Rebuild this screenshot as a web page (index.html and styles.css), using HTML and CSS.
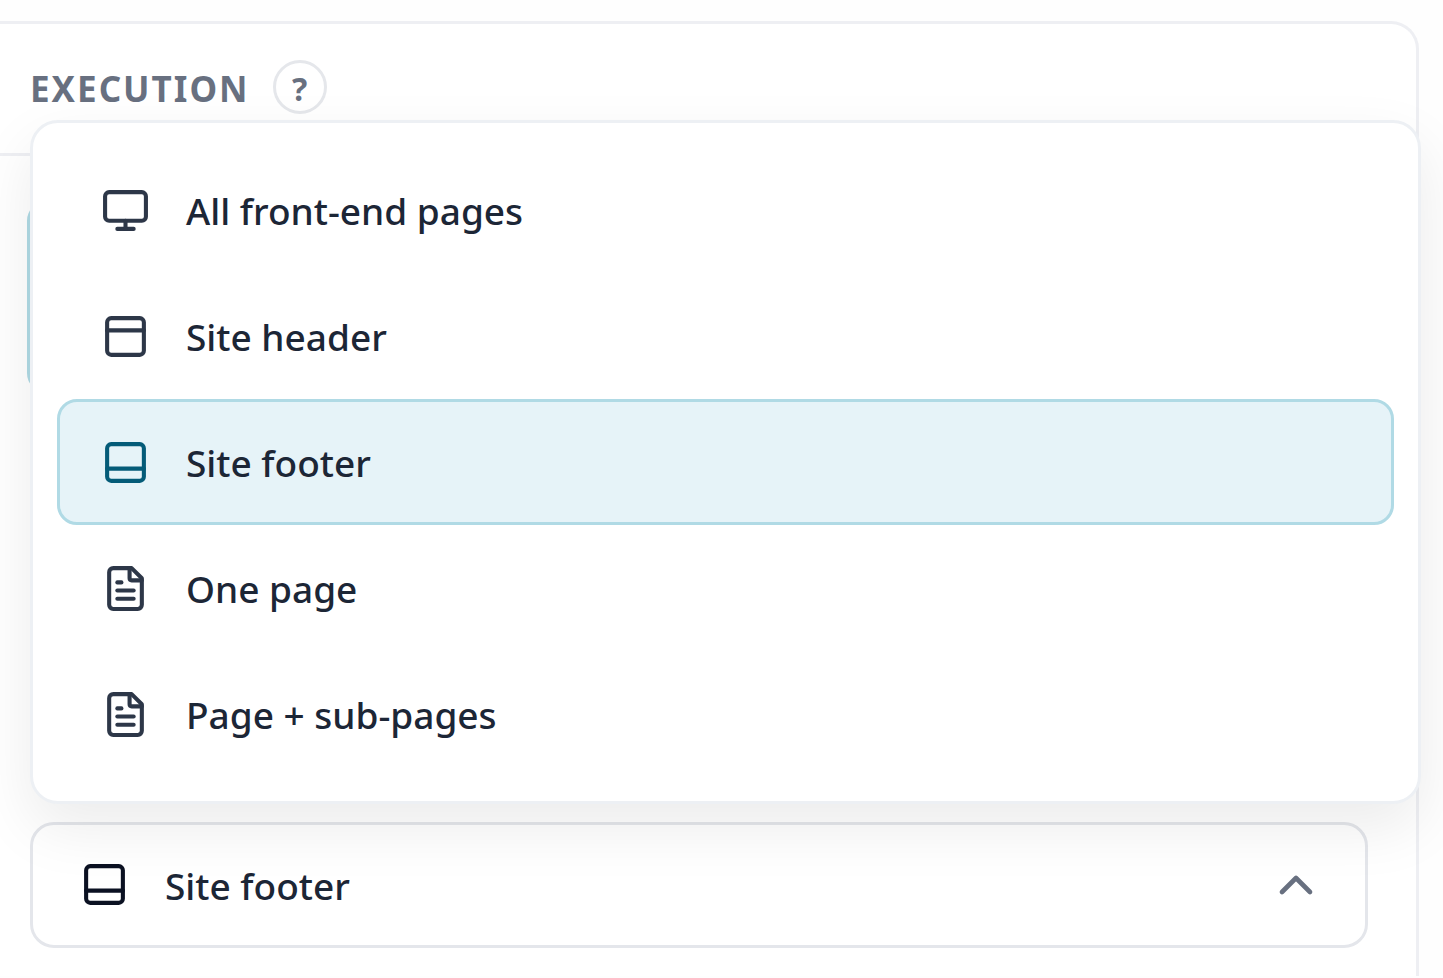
FILE: index.html
```html
<!DOCTYPE html>
<html lang="en">
  <head>
    <meta charset="utf-8" />
    <title>Execution</title>
    <link rel="stylesheet" href="styles.css" />
  </head>
  <body>
    <section class="card">
      <header class="card-header">
        <h2>Execution</h2>
        <button type="button" class="help">?</button>
      </header>

      <div class="card-body">
        <div class="notice"></div>

        <div class="field">
          <svg class="icon field-icon" viewBox="0 0 24 24">
            <rect x="3" y="3" width="18" height="18" rx="2" />
            <path d="M3 15h18" />
          </svg>
          <select class="location" id="location" aria-label="Location">
            <option>All front-end pages</option>
            <option>Site header</option>
            <option selected>Site footer</option>
            <option>One page</option>
            <option>Page + sub-pages</option>
          </select>
          <svg class="icon chevron" viewBox="0 0 24 24">
            <path d="m18 15-6-6-6 6" />
          </svg>

          <div class="menu">
            <button type="button" class="option">
              <svg class="icon" viewBox="0 0 24 24">
                <rect x="2" y="3" width="20" height="14" rx="2" />
                <path d="M8 21h8" />
                <path d="M12 17v4" />
              </svg>
              <span>All front-end pages</span>
            </button>
            <button type="button" class="option">
              <svg class="icon" viewBox="0 0 24 24">
                <rect x="3" y="3" width="18" height="18" rx="2" />
                <path d="M3 9h18" />
              </svg>
              <span>Site header</span>
            </button>
            <button type="button" class="option selected">
              <svg class="icon" viewBox="0 0 24 24">
                <rect x="3" y="3" width="18" height="18" rx="2" />
                <path d="M3 15h18" />
              </svg>
              <span>Site footer</span>
            </button>
            <button type="button" class="option">
              <svg class="icon" viewBox="0 0 24 24">
                <path d="M15 2H6a2 2 0 0 0-2 2v16a2 2 0 0 0 2 2h12a2 2 0 0 0 2-2V7Z" />
                <path d="M14 2v5a1 1 0 0 0 1 1h5" />
                <path d="M10 9H8" />
                <path d="M16 13H8" />
                <path d="M16 17H8" />
              </svg>
              <span>One page</span>
            </button>
            <button type="button" class="option">
              <svg class="icon" viewBox="0 0 24 24">
                <path d="M15 2H6a2 2 0 0 0-2 2v16a2 2 0 0 0 2 2h12a2 2 0 0 0 2-2V7Z" />
                <path d="M14 2v5a1 1 0 0 0 1 1h5" />
                <path d="M10 9H8" />
                <path d="M16 13H8" />
                <path d="M16 17H8" />
              </svg>
              <span>Page + sub-pages</span>
            </button>
          </div>
        </div>
      </div>
    </section>
  </body>
</html>
```
FILE: styles.css
```css
* {
  box-sizing: border-box;
}
body {
  margin: 0;
  padding: 21px 24px 3px 0;
  background: #fefefe;
  color: #1c2636;
  font-family: "Segoe UI", "Noto Sans", "Open Sans", sans-serif;
  font-size: 37px;
  font-weight: 500;
  overflow-x: hidden;
}
button,
select {
  font: inherit;
  color: inherit;
  cursor: pointer;
}

.card {
  border: 3px solid #eeeff3;
  border-width: 3px 3px 0 0;
  border-top-right-radius: 28px;
  background: #fff;
}
.card-header {
  display: flex;
  align-items: center;
  gap: 23px;
  padding: 36px 30px 39px;
  border-bottom: 3px solid #eeeff3;
}
.card-header h2 {
  margin: 0;
  padding-top: 4px;
  color: #687080;
  font-size: 35px;
  font-weight: 700;
  line-height: 50px;
  letter-spacing: 2px;
  text-transform: uppercase;
}
.help {
  width: 54px;
  height: 54px;
  padding: 4px 0 0;
  border: 3px solid #e5e7eb;
  border-radius: 50%;
  background: #fff;
  color: #687080;
  font-size: 32px;
  font-weight: 700;
  line-height: 44px;
}

.card-body {
  padding: 45px 48px 28px 30px;
}
.notice {
  height: 192px;
  margin-left: -3px;
  border: 3px solid #b0dae5;
  border-radius: 20px;
  background: #e6f3f8;
}

.field {
  position: relative;
  margin-top: 429px;
}
.location {
  display: block;
  appearance: none;
  width: 100%;
  height: 126px;
  padding: 0 120px 0 132px;
  border: 3px solid #e4e6eb;
  border-radius: 24px;
  background: #fff;
}
.icon {
  flex: none;
  width: 49px;
  height: 49px;
  fill: none;
  stroke: #2d3748;
  stroke-width: 2;
  stroke-linecap: round;
  stroke-linejoin: round;
}
.field-icon {
  position: absolute;
  top: 38px;
  left: 50px;
  stroke: #0b1122;
}
.chevron {
  position: absolute;
  top: 35px;
  right: 44px;
  width: 56px;
  height: 56px;
  stroke: #687080;
}

/* Open menu, sits above the field */
.menu {
  position: absolute;
  bottom: calc(100% + 18px);
  left: 0;
  right: -53px;
  padding: 24px;
  border: 3px solid #edf0f4;
  border-radius: 28px;
  background: #fff;
  box-shadow: 0 24px 60px rgba(0, 0, 0, 0.08);
}
.option {
  display: flex;
  align-items: center;
  gap: 36px;
  width: 100%;
  height: 126px;
  padding: 0 41px;
  border: 3px solid transparent;
  border-radius: 20px;
  background: none;
  text-align: left;
}
.option.selected {
  border-color: #b0dae5;
  background: #e6f3f8;
}
.option.selected .icon {
  stroke: #045b78;
}
```
